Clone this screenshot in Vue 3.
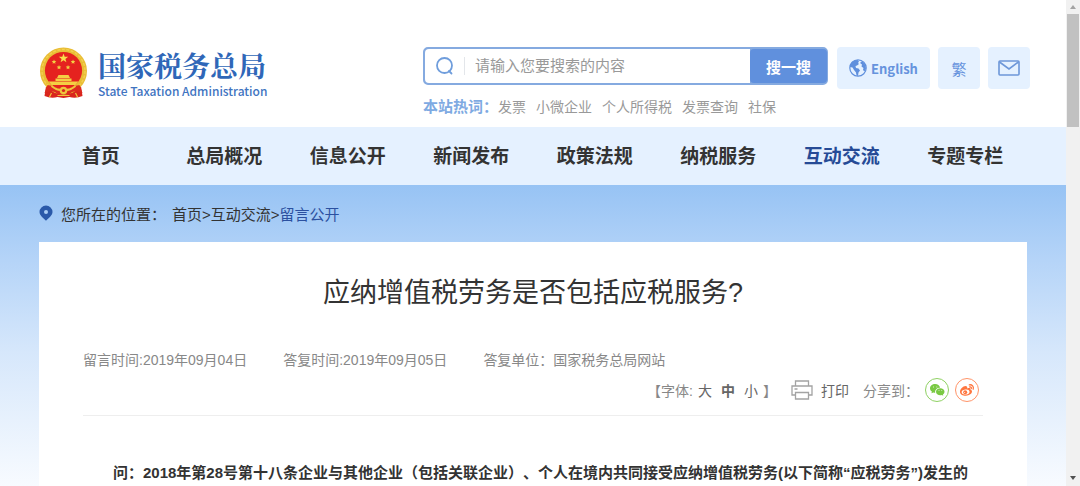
<script setup>
import { ref } from 'vue';

const keyword = ref('');
const fontSize = ref('中');

const hotWords = ['发票', '小微企业', '个人所得税', '发票查询', '社保'];
const navItems = [
  '首页',
  '总局概况',
  '信息公开',
  '新闻发布',
  '政策法规',
  '纳税服务',
  '互动交流',
  '专题专栏',
];
const activeNav = '互动交流';
const sizes = ['大', '中', '小'];
</script>

<template>
  <div class="window">
    <div class="page">
      <header class="header">
        <a class="logo" href="#">
          <svg class="emblem" viewBox="0 0 48 52" aria-hidden="true">
            <path d="M7 36 L5 49 Q12 52 18 50 L24 51 L30 50 Q36 52 43 49 L41 36Z" fill="#d9251d" />
            <circle cx="24" cy="24" r="23.500" fill="#e9bd35" />
            <circle cx="24" cy="24" r="21.500" fill="none" stroke="#f3d04f" stroke-width="1.400" stroke-dasharray="3 1.500" />
            <circle cx="24" cy="23.500" r="18.600" fill="#e5221f" />
            <path d="M24 6.500l1.200 3.300h3.500l-2.800 2.100 1 3.400-2.900-2-2.900 2 1-3.400-2.800-2.100h3.500z" fill="#f9de4c" />
            <g fill="#f4cf43">
              <path d="M14.500 12.500l.7 1.500 1.600.1-1.200 1.100.4 1.600-1.500-.8-1.400.8.3-1.600-1.200-1.100 1.700-.1z" />
              <path d="M33.500 12.500l.7 1.500 1.600.1-1.200 1.100.4 1.600-1.500-.8-1.400.8.3-1.600-1.200-1.100 1.700-.1z" />
              <path d="M19.500 18l.7 1.500 1.600.1-1.200 1.100.4 1.600-1.500-.8-1.400.8.3-1.600-1.200-1.100 1.700-.1z" />
              <path d="M28.500 18l.7 1.500 1.600.1-1.200 1.100.4 1.600-1.500-.8-1.400.8.3-1.600-1.200-1.100 1.700-.1z" />
              <path d="M19 28h10l1.500 3h-13z" />
              <path d="M16 31.500h16v2.500H16z" />
              <path d="M9 34.500h30l-3 3.500H12z" />
            </g>
            <path d="M8 38 Q16 39 20 42 Q24 38 28 42 Q32 39 40 38 L43 46 Q34 42 30 47 H18 Q14 42 5 46Z" fill="#dc2a20" />
            <path d="M12 39 Q17 43 21 43 M36 39 Q31 43 27 43" fill="none" stroke="#efc63d" stroke-width="2" />
            <circle cx="24" cy="43.500" r="3.800" fill="#efc63d" />
            <circle cx="24" cy="43.500" r="1.600" fill="#d9251d" />
            <path d="M12 46l-2 4M36 46l2 4M18 48.500h12" stroke="#efc63d" stroke-width="1.200" />
          </svg>
          <span class="logo-text">
            <strong class="logo-name">国家税务总局</strong>
            <span class="logo-en">State Taxation Administration</span>
          </span>
        </a>

        <div class="search">
          <form class="search-form" role="search" @submit.prevent>
            <label class="search-label" for="keyword" aria-label="搜索">
              <svg viewBox="0 0 20 20" width="20" height="20" fill="none" stroke="#6f9ddc" stroke-width="1.8">
                <circle cx="9.500" cy="9.500" r="7.500" />
                <path d="M14 15l2.500 2.500" stroke-linecap="round" />
              </svg>
            </label>
            <input
              id="keyword"
              v-model="keyword"
              class="search-input"
              type="text"
              placeholder="请输入您要搜索的内容"
            />
            <button class="search-button" type="submit">搜一搜</button>
          </form>
          <div class="hot">
            <strong class="hot-title">本站热词：</strong>
            <a v-for="word in hotWords" :key="word" class="hot-link" href="#">{{ word }}</a>
          </div>
        </div>

        <div class="tools">
          <a class="tool tool-english" href="#">
            <svg viewBox="0 0 18 18" width="18" height="18" aria-hidden="true">
              <circle cx="9" cy="9" r="8.200" fill="#e5f1ff" stroke="#5f8fdd" stroke-width="1.2" />
              <path d="M1 8C1 4 4 1 8.500 1L10 2.500 9 4l1 1-2 1.500L6.500 7l.5 2 2.500.5 1.500 2-1.500 2L9 17c-1.500-.5-2-2-2-3.500L5 11 3.500 8.500z" fill="#5f8fdd" />
              <path d="M11.500 3l2-.5 2.500 3 1 4-1.500 3-1.500-1.500.5-2-2-1.500.5-2-1.500-1z" fill="#5f8fdd" />
            </svg>
            English
          </a>
          <a class="tool tool-square" href="#">繁</a>
          <a class="tool tool-square" href="#" aria-label="邮箱">
            <svg viewBox="0 0 22 16" width="22" height="16" fill="none" stroke="#6d97d9" stroke-width="1.6">
              <rect x="1" y="1" width="20" height="14" rx="1" />
              <path d="M1.500 2L11 9l9.500-7" />
            </svg>
          </a>
        </div>
      </header>

      <nav class="nav">
        <a
          v-for="item in navItems"
          :key="item"
          class="nav-link"
          :class="{ active: item === activeNav }"
          href="#"
        >{{ item }}</a>
      </nav>

      <main class="content">
        <div class="breadcrumb">
          <svg class="pin" viewBox="0 0 14 16" width="14" height="16" aria-hidden="true">
            <path d="M7 0.500a6.500 6.500 0 0 1 6.500 6.500c0 3.500-4 6-6.500 8.800C4.500 13 .5 10.500.5 7A6.500 6.500 0 0 1 7 .5z" fill="#2a59a9" />
            <circle cx="7" cy="7" r="2" fill="#a9cdf5" />
          </svg>
          <span class="breadcrumb-label">您所在的位置：</span>
          <span><a href="#">首页</a>&gt;<a href="#">互动交流</a>&gt;<a class="current" href="#">留言公开</a></span>
        </div>

        <article class="card">
          <h1 class="title">应纳增值税劳务是否包括应税服务?</h1>
          <div class="info">
            <div class="meta">
              <span>留言时间:2019年09月04日</span>
              <span>答复时间:2019年09月05日</span>
              <span>答复单位：国家税务总局网站</span>
            </div>
            <div class="actions">
              <div class="sizes">
                <span>【字体:</span>
                <button
                  v-for="size in sizes"
                  :key="size"
                  type="button"
                  class="size-button"
                  :class="{ selected: size === fontSize }"
                  @click="fontSize = size"
                >{{ size }}</button>
                <span class="bracket">】</span>
              </div>
              <button type="button" class="print">
                <svg viewBox="0 0 22 20" width="22" height="20" fill="none" stroke="#a3a3a3" stroke-width="1.3">
                  <path d="M4.500 6V1h13v5M4.500 15H1V6h20v9h-3.500" />
                  <path d="M4.500 12.500h13V19h-13zM3.500 9h3" />
                </svg>
                打印
              </button>
              <div class="share">
                <span>分享到：</span>
                <a class="share-link wechat" href="#" aria-label="微信">
                  <svg viewBox="0 0 16 16" width="16" height="16">
                    <path d="M6.200 2C3.200 2 1 3.900 1 6.300c0 1.400.7 2.500 1.900 3.300l-.5 1.700 2-.9c.6.200 1.200.3 1.800.3-.6-2.900 1.900-5 4.900-5C10.700 3.500 8.700 2 6.200 2z" fill="#7ac943" />
                    <path d="M15.500 9.700c0-2-1.900-3.500-4.200-3.500S7 7.700 7 9.700s1.900 3.500 4.300 3.500c.5 0 1-.1 1.500-.2l1.500.8-.4-1.400c1-.7 1.600-1.600 1.600-2.700z" fill="#7ac943" />
                    <path d="M4.500 4.500v1M7.800 4.500v1M10 8v.8M12.700 8v.8" stroke="#fff" stroke-width=".7" />
                  </svg>
                </a>
                <a class="share-link weibo" href="#" aria-label="微博">
                  <svg viewBox="0 0 16 16" width="16" height="16" fill="none">
                    <path d="M6.500 4C4 4 1 7.200 1 9.900c0 2.300 2.700 3.900 5.800 3.900 3.700 0 6.200-2.300 6.200-4.200 0-1.100-.8-1.700-1.600-2 .4-1.500-.8-2-3.200-1.200.3-1.300-.2-2.400-1.700-2.400z" fill="#ff763f" />
                    <ellipse cx="6.600" cy="10" rx="4" ry="2.500" fill="#fff" transform="rotate(-8 6.600 10)" />
                    <circle cx="6.200" cy="10.200" r="2" fill="#ff763f" />
                    <circle cx="5.700" cy="10.500" r=".5" fill="#fff" />
                    <path d="M10.300 2.800c2.900-.5 4.700 1.900 3.900 4.400M10.700 4.900c1.200-.2 1.900.6 1.600 1.700" stroke="#ff763f" stroke-width="1.300" stroke-linecap="round" />
                  </svg>
                </a>
              </div>
            </div>
          </div>
          <p class="question">
            问：2018年第28号第十八条企业与其他企业（包括关联企业）、个人在境内共同接受应纳增值税劳务(以下简称“应税劳务”)发生的
          </p>
        </article>
      </main>
    </div>

    <div class="scrollbar" aria-hidden="true">
      <span class="arrow arrow-up"></span>
      <span class="thumb"></span>
      <span class="arrow arrow-down"></span>
    </div>
  </div>
</template>

<style>
body {
  margin: 0;
  background: #fff;
}
</style>

<style scoped>
.window {
  display: flex;
  height: 100vh;
  overflow: hidden;
  font-family: "Liberation Sans", "Noto Sans CJK SC", sans-serif;
  font-size: 15px;
  color: #333;
  text-spacing-trim: space-all;
}

.window * {
  box-sizing: border-box;
}

a {
  color: inherit;
  text-decoration: none;
}

button {
  padding: 0;
  border: none;
  background: none;
  font: inherit;
  color: inherit;
  cursor: pointer;
}

svg {
  display: block;
  flex-shrink: 0;
}

.page {
  display: flex;
  flex: 1;
  flex-direction: column;
  min-width: 0;
}

.header {
  display: flex;
  align-items: flex-start;
  flex-shrink: 0;
  padding: 47px 36px 9px 39px;
}

.logo {
  display: flex;
  align-items: center;
  gap: 10px;
  color: #2f67b8;
}

.emblem {
  width: 49px;
  height: 52px;
}

.logo-text {
  display: flex;
  flex-direction: column;
  white-space: nowrap;
}

.logo-name {
  font-family: "Noto Serif CJK SC", "Noto Sans CJK SC", serif;
  font-size: 28px;
  line-height: 36px;
}

.logo-en {
  font-family: "Noto Sans CJK SC", sans-serif;
  font-size: 12px;
  font-weight: 500;
  line-height: 16px;
  color: #3f74c1;
}

.search {
  width: 405px;
  margin-left: auto;
}

.search-form {
  display: flex;
  height: 38px;
  border: 2px solid #85aae0;
  border-radius: 5px;
  background: #85aae0;
}

.search-label {
  display: flex;
  align-items: center;
  padding: 0 9px 0 10px;
  border-radius: 4px 0 0 4px;
  background: #fff;
}

.search-input {
  flex: 1;
  min-width: 0;
  padding: 0 11px 2px;
  border: none;
  outline: none;
  background: linear-gradient(#e3e6ea, #e3e6ea) 0 50% / 1px 18px no-repeat #fff;
  font: inherit;
  color: #333;
}

.search-input::placeholder {
  color: #999;
  opacity: 1;
}

.search-button {
  width: 77px;
  margin-right: -1px;
  border-radius: 4px;
  background: #6090dd;
  font-weight: bold;
  color: #fff;
}

.hot {
  display: flex;
  align-items: center;
  gap: 10px;
  height: 33px;
  padding-top: 8px;
  font-size: 14px;
  color: #999;
  white-space: nowrap;
}

.hot-title {
  margin-right: -10px;
  font-size: 15px;
  color: #7eaae2;
}

.tools {
  display: flex;
  gap: 8px;
  margin-left: 9px;
}

.tool {
  display: flex;
  align-items: center;
  justify-content: center;
  gap: 4px;
  height: 42px;
  border-radius: 4px;
  background: #e5f1ff;
  color: #6693dd;
}

.tool-english {
  width: 93px;
  font-family: "Noto Sans CJK SC", sans-serif;
  font-size: 13px;
  font-weight: bold;
}

.tool-square {
  width: 42px;
}

.nav {
  display: grid;
  flex-shrink: 0;
  grid-template-columns: repeat(8, 1fr);
  padding: 2px 39px 0;
  background: #e5f1ff;
}

.nav-link {
  font-size: 19px;
  font-weight: bold;
  line-height: 56px;
  text-align: center;
  white-space: nowrap;
}

.nav-link.active {
  color: #264b96;
}

.content {
  display: flex;
  flex: 1;
  flex-direction: column;
  padding: 0 39px;
  background: linear-gradient(#97c3f4, #b5d4f8 25%, #d6e7fb 55%, #f8fbff);
}

.breadcrumb {
  display: flex;
  align-items: center;
  height: 57px;
  padding-bottom: 1px;
}

.breadcrumb-label {
  margin: 0 6px 0 8px;
}

.current {
  color: #2b50a0;
}

.card {
  flex: 1;
  padding: 31px 44px 0;
  background: #fff;
}

.title {
  margin: 0;
  font-size: 27px;
  font-weight: normal;
  line-height: 40px;
  text-align: center;
}

.info {
  padding-top: 37px;
  border-bottom: 1px solid #eee;
  font-size: 14px;
  color: #888;
}

.meta {
  display: flex;
  gap: 36px;
  line-height: 20px;
}

.actions {
  display: flex;
  align-items: center;
  justify-content: flex-end;
  gap: 14px;
  height: 45px;
  padding: 0 4px 5px 0;
}

.sizes {
  display: flex;
  gap: 9px;
}

.size-button {
  color: #666;
}

.size-button:first-of-type {
  margin-left: -4px;
}

.size-button.selected {
  font-weight: bold;
}

.bracket {
  margin-left: -4px;
}

.print {
  display: flex;
  align-items: center;
  gap: 8px;
  color: #666;
}

.share {
  display: flex;
  align-items: center;
  gap: 6px;
}

.share-link {
  display: flex;
  align-items: center;
  justify-content: center;
  width: 24px;
  height: 24px;
  border: 1px solid;
  border-radius: 50%;
}

.wechat {
  border-color: #8fd163;
}

.weibo {
  border-color: #ff9468;
}

.question {
  margin: 42px 0 0;
  font-weight: bold;
  line-height: 30px;
  text-indent: 2em;
}

.scrollbar {
  display: flex;
  flex-direction: column;
  align-items: center;
  width: 14px;
  background: #f1f1f1;
}

.thumb {
  width: 12px;
  height: 113px;
  background: #c1c1c1;
}

.arrow {
  width: 0;
  height: 0;
  border: 3px solid transparent;
}

.arrow-up {
  margin: 2px 0 5px;
  border-bottom: 4px solid #a3a3a3;
}

.arrow-down {
  margin: auto 0 3px;
  border-top: 4px solid #505050;
}
</style>
